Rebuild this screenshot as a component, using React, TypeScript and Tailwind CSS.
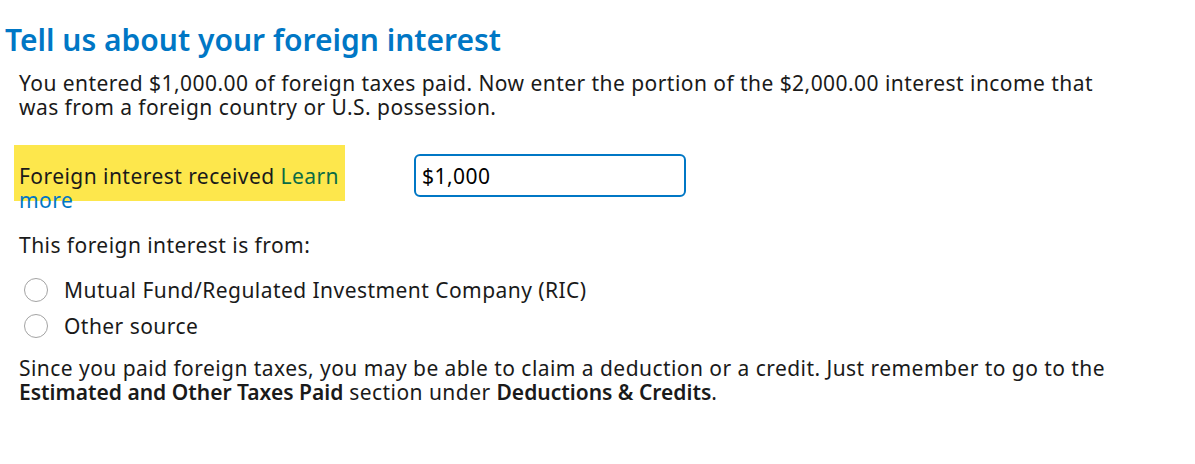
export default function App() {
    return (
        <div className="min-h-[464px] w-[1195px] bg-white font-['Noto_Sans',sans-serif] text-[#1a1a1a]">
            <div className="pt-[22px] pl-[5px]">
                <h1 className="text-[30px] leading-[36px] font-semibold text-[#0077c5]">Tell us about your foreign interest</h1>
            </div>

            <div className="pl-[19px] text-[21px] leading-[24px] tracking-[0.45px]">
                <p className="mt-[13px] w-[1150px]">
                    You entered $1,000.00 of foreign taxes paid. Now enter the portion of the $2,000.00 interest income that
                    <br />
                    was from a foreign country or U.S. possession.
                </p>

                <div className="mt-[45px] flex items-start">
                    <div className="relative w-[395px]">
                        <div className="absolute top-[-19px] left-[-5px] h-[56px] w-[331px] bg-[#fde74c]" />
                        <label className="relative block w-[330px]">
                            Foreign interest received <span className="text-[#0b6b45]">Learn</span>{' '}
                            <span className="text-[#0077c5]">more</span>
                        </label>
                    </div>
                    <input
                        type="text"
                        defaultValue="$1,000"
                        className="mt-[-10px] h-[43px] w-[272px] rounded-[6px] border-2 border-[#0077c5] px-[6px] text-[21px] tracking-[0.45px] text-black outline-none"
                    />
                </div>

                <p className="mt-[21px]">This foreign interest is from:</p>

                <div className="mt-[21px] flex flex-col gap-[12px]">
                    {['Mutual Fund/Regulated Investment Company (RIC)', 'Other source'].map((label) => (
                        <label key={label} className="flex items-center">
                            <span className="ml-[5px] inline-block h-[24px] w-[24px] rounded-full border border-[#a3a3a3] bg-white" />
                            <span className="ml-[16px]">{label}</span>
                        </label>
                    ))}
                </div>

                <p className="mt-[18px] w-[1160px]">
                    Since you paid foreign taxes, you may be able to claim a deduction or a credit. Just remember to go to the
                    <br />
                    <span className="font-semibold tracking-normal">Estimated and Other Taxes Paid</span> section under{' '}
                    <span className="font-semibold tracking-normal">Deductions &amp; Credits</span>.
                </p>
            </div>
        </div>
    );
}
